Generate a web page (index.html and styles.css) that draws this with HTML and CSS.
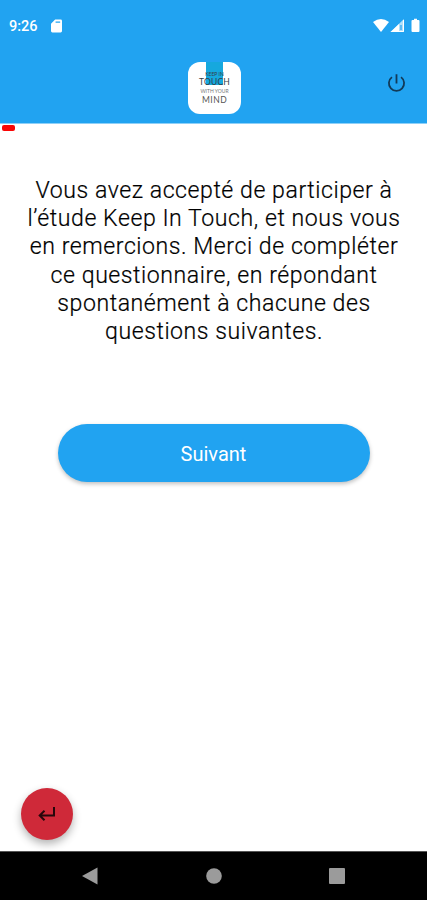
FILE: index.html
```html
<!DOCTYPE html>
<html lang="fr">
<head>
<meta charset="utf-8">
<title>Keep In Touch</title>
<link rel="stylesheet" href="styles.css">
</head>
<body>
<div class="screen">
  <header class="header">
    <div class="status">
      <span class="time">9:26</span>
      <svg class="sd" viewBox="0 0 12 14"><path fill="#fff" fill-rule="evenodd" d="M4.5 0H10.5Q12 0 12 1.5V12.500Q12 14 10.500 14H1.500Q0 14 0 12.500V4.500ZM5 2V3.500H10V2Z"/></svg>
      <svg class="signals" viewBox="0 0 48 16">
        <path fill="#fff" d="M0 4Q8 -2 16 4L8 14Z"/>
        <path fill="#fff" fill-opacity=".65" d="M17.500 14L31 1V14Z"/>
        <path fill="#fff" d="M17.500 14L26 6V14Z"/>
        <path fill="none" stroke="#fff" d="M30.500 2V13.500H25"/>
        <path fill="#21a3f1" fill-opacity=".6" d="M27 7h2v5h-2z"/>
        <path fill="#fff" d="M39.500 2H41V.7H44V2H45.500Q46.500 2 46.500 3V13Q46.500 14 45.500 14H39.500Q38.500 14 38.500 13V3Q38.500 2 39.500 2Z"/>
      </svg>
    </div>
    <div class="appbar">
      <div class="logo">
        <span class="tab"></span>
        <span class="word keep">KEEP IN</span>
        <span class="word touch">TOUCH</span>
        <span class="word with">WITH YOUR</span>
        <span class="word mind">MIND</span>
      </div>
      <svg class="power" viewBox="0 0 20 20" fill="none" stroke="#123a58" stroke-width="1.900"><path d="M10 .7V10.500M5.200 3.800A8 8 0 1 0 14.800 3.800"/></svg>
    </div>
  </header>
  <div class="progress"></div>
  <main class="main">
    <p class="intro">Vous avez accepté de participer à<br>l’étude Keep In Touch, et nous vous<br>en remercions. Merci de compléter<br>ce questionnaire, en répondant<br>spontanément à chacune des<br>questions suivantes.</p>
    <button class="next">Suivant</button>
    <button class="back" aria-label="Retour"><svg viewBox="0 0 18 16" fill="none" stroke="#26070b" stroke-width="2"><path d="M16 1V9.500H2M6.500 4.700L1.700 9.500L6.500 14.300"/></svg></button>
  </main>
  <nav class="nav">
    <svg viewBox="0 0 18 18" fill="#9b9b9b"><path d="M1 9L16.500 .500V17.500Z"/></svg>
    <svg viewBox="0 0 18 18" fill="#9b9b9b"><circle cx="9" cy="9" r="7.800"/></svg>
    <svg viewBox="0 0 18 18" fill="#9b9b9b"><rect x="1" y="1" width="16" height="16" rx="1"/></svg>
  </nav>
</div>
</body>
</html>
```
FILE: styles.css
```css
* { box-sizing: border-box; }
body { margin: 0; font-family: Roboto, sans-serif; background: #fff; }
svg { display: block; }
button { border: 0; font-family: inherit; padding: 0; }
.screen { width: 427px; height: 900px; display: flex; flex-direction: column; overflow: hidden; }
.header { height: 124px; background: #21a3f1; border-bottom: 1px solid #8ed0f8; }
.status { height: 52px; display: flex; align-items: center; padding: 0 6px 0 9px; color: #fff; }
.time { width: 42px; font-size: 14.500px; font-weight: 500; line-height: 20px; padding-top: 2px; }
.sd { width: 11px; height: 14px; }
.signals { width: 48px; height: 16px; margin-left: auto; }
.appbar { height: 71px; display: flex; align-items: flex-start; justify-content: space-between; padding: 10px 21px 0 188px; }
.logo { position: relative; width: 53px; height: 52px; border-radius: 12px; background: #fff; display: flex; flex-direction: column; align-items: center; padding-top: 9px; overflow: hidden; }
.tab { position: absolute; left: 18px; top: 0; width: 17px; height: 23px; background: #16a8de; }
.word { position: relative; font-family: Lato, sans-serif; color: #334148; white-space: nowrap; }
.keep { font-size: 5px; line-height: 7px; }
.touch { font-size: 8.500px; line-height: 9px; letter-spacing: .2px; }
.with { font-size: 5px; line-height: 9px; color: #777; }
.mind { font-size: 8.500px; line-height: 8px; letter-spacing: .5px; color: #555; }
.power { width: 19px; height: 20px; margin-top: 11px; }
.progress { width: 13px; height: 6px; margin: 1px 0 0 2px; background: #f90505; border-radius: 2px; }
.main { height: 720px; display: flex; flex-direction: column; align-items: center; }
.intro { margin: 46px 0 0; padding-left: 1px; text-align: center; font-size: 23.100px; font-weight: 350; line-height: 28.200px; letter-spacing: .55px; color: #000; white-space: nowrap; -webkit-text-stroke: .2px #000; }
.next { width: 312px; height: 58px; margin-top: 78px; border-radius: 29px; background: #21a3f1; color: #fff; font-size: 20px; box-shadow: 0 2px 4px rgba(0,0,0,.25); padding-top: 2px; }
.back { width: 52px; height: 52px; margin: auto 0 11px 21px; align-self: flex-start; border-radius: 50%; background: #cf2939; display: flex; align-items: center; justify-content: center; box-shadow: 0 4px 8px rgba(0,0,0,.3); }
.back svg { width: 18px; height: 16px; }
.nav { height: 49px; background: #000; display: flex; justify-content: space-between; align-items: center; padding: 0 81px; border-top: 1px solid #555; }
.nav svg { width: 18px; height: 18px; }
```
